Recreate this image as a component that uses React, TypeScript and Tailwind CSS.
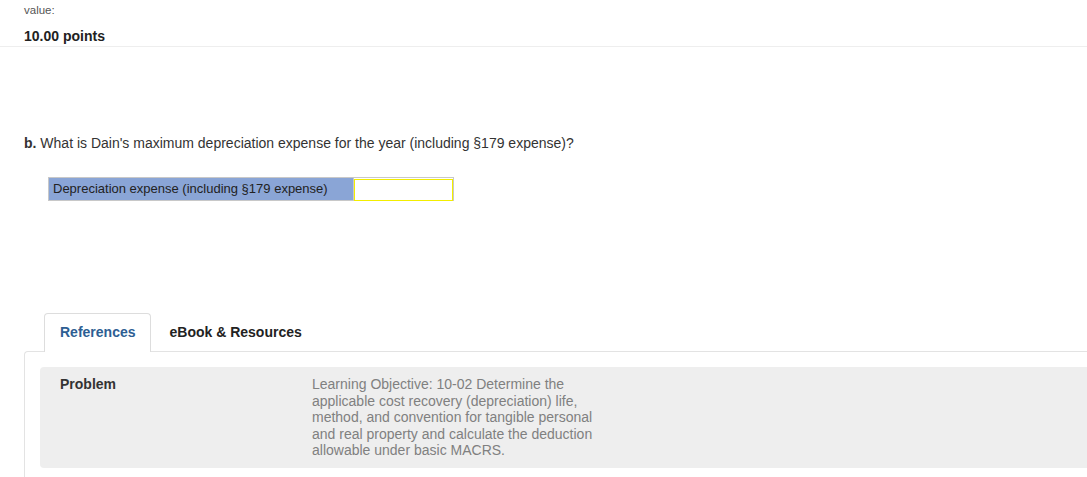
export default function App() {
  return (
    <div className="min-h-[477px] w-full overflow-hidden bg-white font-['Liberation_Sans',Arial,sans-serif] text-[#333]">
      {/* Header */}
      <div className="border-b border-[#eee] px-[24px] pt-[4px] pb-[2px]">
        <div className="text-[11.5px] leading-[13px] text-[#555]">value:</div>
        <div className="mt-[11px] text-[14px] font-bold leading-[16px] text-[#222]">10.00 points</div>
      </div>

      {/* Question */}
      <p className="mt-[88px] px-[24px] text-[14px] leading-[16px] text-[#333]">
        <span className="font-bold">b.</span> What is Dain's maximum depreciation expense for the year (including §179 expense)?
      </p>

      <div className="ml-[48px] mt-[26px] flex h-[24px] w-[406px] border border-[#c8c8c8]">
        <div className="flex w-[304px] items-center bg-[#8aa5d6] pl-[4px] text-[13px] text-[#222]">
          Depreciation expense (including §179 expense)
        </div>
        <div className="flex-1 border-l border-[#c8c8c8] p-0">
          <input className="h-full w-full border-[1.5px] border-[#f3ee00] bg-white outline-none" />
        </div>
      </div>

      {/* Tabs */}
      <div className="mt-[112px] flex pl-[44px]">
        <div className="relative z-10 mb-[-1px] mr-[2px] rounded-t-[4px] border border-b-0 border-[#ddd] bg-white pl-[15px] pr-[14px] pt-[10px] pb-[10px] text-[14px] font-bold leading-[17px] text-[#2d5e93]">
          References
        </div>
        <div className="mb-[-1px] border border-transparent pl-[16px] pr-[16px] pt-[10px] pb-[10px] text-[14px] font-bold leading-[17px] text-[#222]">
          eBook &amp; Resources
        </div>
      </div>
      <div className="ml-[24px] w-[1100px] rounded-tl-[4px] border-l border-t border-[#e3e3e3] pl-[15px] pt-[15px] pb-[20px]">
        <div className="flex rounded-[4px] bg-[#eee] pl-[20px] pt-[9px] pb-[9px]">
          <div className="w-[252px] text-[14px] font-bold leading-[16.6px] text-[#333]">Problem</div>
          <div className="w-[300px] text-[14px] leading-[16.6px] text-[#808080]">
            Learning Objective: 10-02 Determine the applicable cost recovery (depreciation) life, method, and convention for tangible personal and real property and calculate the deduction allowable under basic MACRS.
          </div>
        </div>
      </div>
    </div>
  );
}
